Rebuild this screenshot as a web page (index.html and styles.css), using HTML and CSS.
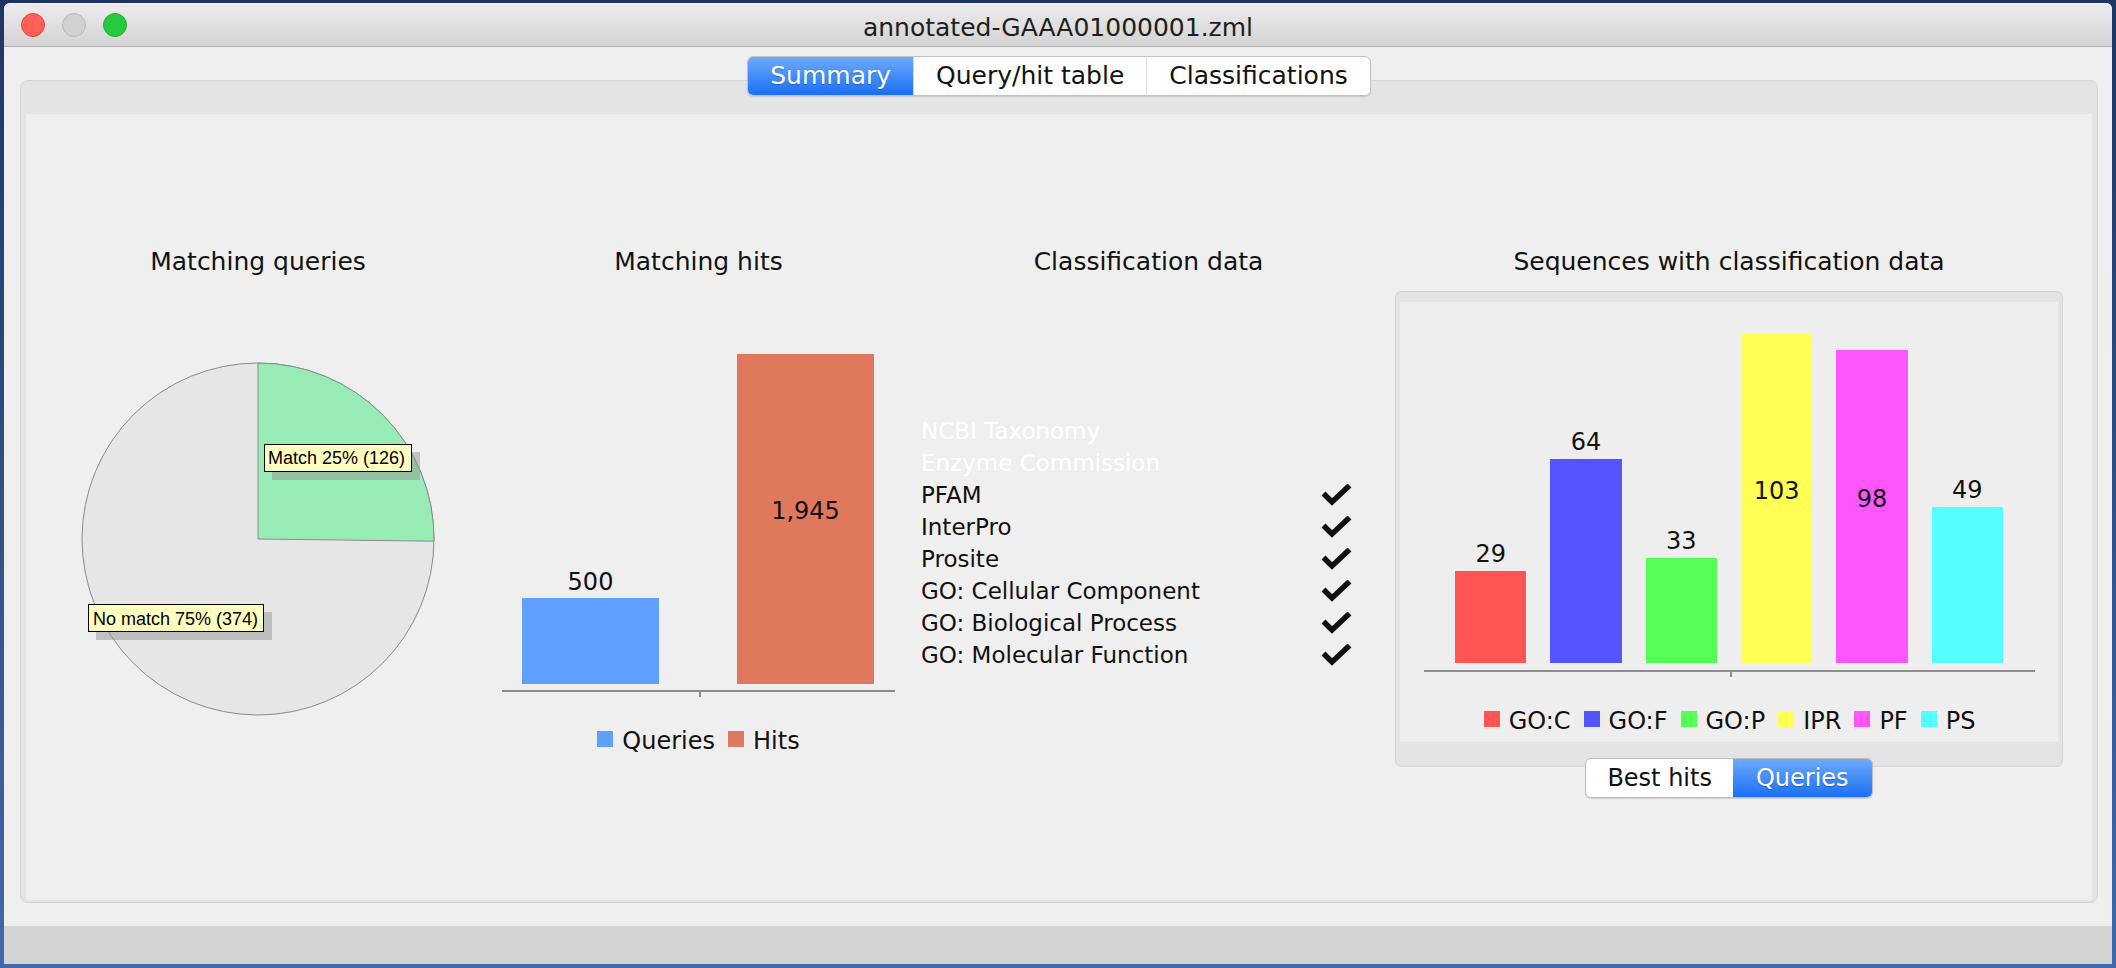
FILE: index.html
```html
<!DOCTYPE html>
<html lang="en">
<head>
  <meta charset="UTF-8" />
  <title>annotated-GAAA01000001.zml</title>
  <link rel="stylesheet" href="styles.css">
</head>
<body>

<div class="window">
  <!-- Title bar -->
  <div class="titlebar">
    <div class="lights">
      <span class="light close"></span>
      <span class="light minimize"></span>
      <span class="light zoom"></span>
    </div>
    <div class="title">annotated-GAAA01000001.zml</div>
    <div></div>
  </div>

  <div class="main">
    <div class="tabs">
      <div class="tab active">Summary</div>
      <div class="tab">Query/hit table</div>
      <div class="tab">Classifications</div>
    </div>

    <div class="panel">
      <div class="content">

        <!-- Matching queries -->
        <div class="col col-pie">
          <h2>Matching queries</h2>
          <svg class="pie" width="436" height="460" viewBox="0 0 436 460">
            <circle cx="218" cy="262" r="176" fill="#e6e6e6" stroke="#8a8a8a" stroke-width="1"/>
            <path d="M218 262 L218 86 A176 176 0 0 1 394 264.2 Z" fill="#96ecb4" stroke="#8a8a8a" stroke-width="1"/>

            <rect x="232" y="175" width="148" height="28" fill="#949494" fill-opacity="0.5"/>
            <rect x="224.5" y="167.5" width="147" height="27" fill="#ffffc0" stroke="#000" stroke-width="1"/>
            <text x="228" y="187" class="pie-label">Match 25% (126)</text>

            <rect x="56" y="335" width="176" height="28" fill="#949494" fill-opacity="0.5"/>
            <rect x="48.5" y="327.5" width="175" height="27" fill="#ffffc0" stroke="#000" stroke-width="1"/>
            <text x="53" y="348" class="pie-label">No match 75% (374)</text>
          </svg>
        </div>

        <!-- Matching hits -->
        <div class="col col-hits">
          <h2>Matching hits</h2>
          <div class="hits-chart">
            <div class="plot hits-plot">
              <div class="bar-col">
                <div class="value">500</div>
                <div class="bar queries" style="height: 86px"></div>
              </div>
              <div class="bar-col">
                <div class="bar hits" style="height: 330px">
                  <div class="value inside">1,945</div>
                </div>
              </div>
            </div>
            <div class="legend">
              <div class="legend-item"><span class="swatch queries"></span>Queries</div>
              <div class="legend-item"><span class="swatch hits"></span>Hits</div>
            </div>
          </div>
        </div>

        <!-- Classification data -->
        <div class="col col-class">
          <h2>Classification data</h2>
          <div class="class-list">
            <div class="class-row off">NCBI Taxonomy</div>
            <div class="class-row off">Enzyme Commission</div>
            <div class="class-row">PFAM
              <svg class="check" width="31" height="22" viewBox="0 0 31 22"><polyline points="2.5,9.5 11,18 28.5,1.5" fill="none" stroke="#111" stroke-width="5.5"/></svg>
            </div>
            <div class="class-row">InterPro
              <svg class="check" width="31" height="22" viewBox="0 0 31 22"><polyline points="2.5,9.5 11,18 28.5,1.5" fill="none" stroke="#111" stroke-width="5.5"/></svg>
            </div>
            <div class="class-row">Prosite
              <svg class="check" width="31" height="22" viewBox="0 0 31 22"><polyline points="2.5,9.5 11,18 28.5,1.5" fill="none" stroke="#111" stroke-width="5.5"/></svg>
            </div>
            <div class="class-row">GO: Cellular Component
              <svg class="check" width="31" height="22" viewBox="0 0 31 22"><polyline points="2.5,9.5 11,18 28.5,1.5" fill="none" stroke="#111" stroke-width="5.5"/></svg>
            </div>
            <div class="class-row">GO: Biological Process
              <svg class="check" width="31" height="22" viewBox="0 0 31 22"><polyline points="2.5,9.5 11,18 28.5,1.5" fill="none" stroke="#111" stroke-width="5.5"/></svg>
            </div>
            <div class="class-row">GO: Molecular Function
              <svg class="check" width="31" height="22" viewBox="0 0 31 22"><polyline points="2.5,9.5 11,18 28.5,1.5" fill="none" stroke="#111" stroke-width="5.5"/></svg>
            </div>
          </div>
        </div>

        <!-- Sequences with classification data -->
        <div class="col col-seq">
          <h2>Sequences with classification data</h2>
          <div class="seq-panel">
            <div class="seq-inner">
              <div class="plot seq-plot">
                <div class="bar-col">
                  <div class="value">29</div>
                  <div class="bar goc" style="height: 92px"></div>
                </div>
                <div class="bar-col">
                  <div class="value">64</div>
                  <div class="bar gof" style="height: 204px"></div>
                </div>
                <div class="bar-col">
                  <div class="value">33</div>
                  <div class="bar gop" style="height: 105px"></div>
                </div>
                <div class="bar-col">
                  <div class="bar ipr" style="height: 329px">
                    <div class="value inside">103</div>
                  </div>
                </div>
                <div class="bar-col">
                  <div class="bar pf" style="height: 313px">
                    <div class="value inside">98</div>
                  </div>
                </div>
                <div class="bar-col">
                  <div class="value">49</div>
                  <div class="bar ps" style="height: 156px"></div>
                </div>
              </div>
              <div class="legend">
                <div class="legend-item"><span class="swatch goc"></span>GO:C</div>
                <div class="legend-item"><span class="swatch gof"></span>GO:F</div>
                <div class="legend-item"><span class="swatch gop"></span>GO:P</div>
                <div class="legend-item"><span class="swatch ipr"></span>IPR</div>
                <div class="legend-item"><span class="swatch pf"></span>PF</div>
                <div class="legend-item"><span class="swatch ps"></span>PS</div>
              </div>
            </div>
          </div>
          <div class="toggle">
            <div class="toggle-btn">Best hits</div>
            <div class="toggle-btn active">Queries</div>
          </div>
        </div>

      </div>
    </div>
  </div>

  <div class="statusbar"></div>
</div>

</body>
</html>
```

FILE: styles.css
```css
body {
  margin: 0;
  height: 968px;
  padding: 3px 4px 4px;
  box-sizing: border-box;
  background: linear-gradient(#1f3561, #4169a9);
  font-family: "DejaVu Sans", "Open Sans", sans-serif;
  color: #111;
}

.window {
  height: 100%;
  display: flex;
  flex-direction: column;
  background: #efefef;
  border-radius: 6px 6px 0 0;
  overflow: hidden;
}

/* Title bar */
.titlebar {
  height: 43px;
  flex-shrink: 0;
  border-bottom: 1px solid #b1b1b1;
  background: linear-gradient(#ededed, #d3d3d3);
  display: grid;
  grid-template-columns: 1fr auto 1fr;
  align-items: center;
}

.lights {
  display: flex;
  gap: 17px;
  padding-left: 17px;
}

.light {
  width: 24px;
  height: 24px;
  border-radius: 50%;
  box-sizing: border-box;
  border: 1px solid;
}

.light.close {
  background: #fe5f57;
  border-color: #e1463f;
}

.light.minimize {
  background: #d1d1d1;
  border-color: #b9b9b9;
}

.light.zoom {
  background: #27c93f;
  border-color: #1dad2b;
}

.title {
  font-size: 25px;
  color: #1e1e1e;
  padding-top: 6px;
}

/* Main area with tabbed pane */
.main {
  flex: 1;
  display: flex;
  flex-direction: column;
  padding: 9px 14px 23px 16px;
  min-height: 0;
}

.tabs {
  align-self: center;
  display: flex;
  background: #fff;
  border: 1px solid #c2c2c2;
  border-radius: 6px;
  box-shadow: 0 1px 1px rgba(0,0,0,0.12);
  position: relative;
  z-index: 1;
}

.tab {
  font-size: 25px;
  line-height: 38px;
  padding: 0 22px;
  border-left: 1px solid #d9d9d9;
}

.tab.active {
  border-left: none;
  border-radius: 5px 0 0 5px;
  background: linear-gradient(#6eabfb, #1a6ff6);
  color: #fff;
  text-shadow: 0 1px 1px rgba(0,0,0,0.25);
}

.panel {
  flex: 1;
  display: flex;
  margin-top: -16px;
  padding: 33px 5px 2px;
  background: #e4e4e4;
  border: 1px solid #d6d6d6;
  border-radius: 8px;
}

.content {
  flex: 1;
  display: flex;
  padding-left: 14px;
  background: #efefef;
}

.col {
  display: flex;
  flex-direction: column;
  align-items: center;
  padding-top: 133px;
}

.col h2 {
  margin: 0;
  font-size: 25px;
  font-weight: normal;
  line-height: 30px;
  white-space: nowrap;
}

.col-pie { width: 436px; }
.col-hits { width: 445px; }
.col-class { width: 455px; }
.col-seq { width: 706px; }

/* Pie */
.pie {
  display: block;
}

.pie-label {
  font-family: "Liberation Sans", Arial, sans-serif;
  font-size: 18px;
  fill: #000;
}

/* Bar charts */
.hits-chart {
  width: 393px;
  margin-top: 35px;
}

.plot {
  display: flex;
  align-items: flex-end;
  box-sizing: border-box;
  border-bottom: 2px solid #8c8c8c;
  position: relative;
}

.plot::after {
  content: "";
  position: absolute;
  left: 50%;
  bottom: -7px;
  width: 2px;
  height: 5px;
  background: #8c8c8c;
}

.hits-plot {
  height: 380px;
  padding: 0 21px 6px 20px;
  justify-content: space-between;
}

.hits-plot .bar-col {
  width: 137px;
}

.bar-col {
  display: flex;
  flex-direction: column;
}

.value {
  font-size: 24px;
  line-height: 24px;
  text-align: center;
  margin-bottom: 4px;
}

.bar {
  position: relative;
}

.value.inside {
  position: absolute;
  left: 0;
  right: 0;
  top: calc(50% - 20px);
  margin: 0;
}

.queries { background: #5fa0ff; }
.hits { background: #e0785e; }
.goc { background: #ff5555; }
.gof { background: #5555ff; }
.gop { background: #55ff55; }
.ipr { background: #ffff55; }
.pf { background: #ff55ff; }
.ps { background: #55ffff; }

.legend {
  display: flex;
  justify-content: center;
  align-items: center;
  gap: 13px;
  margin-top: 37px;
  font-size: 24px;
  line-height: 24px;
}

.legend-item {
  display: flex;
  align-items: center;
  gap: 9px;
}

.swatch {
  width: 16px;
  height: 16px;
  margin-bottom: 4px;
}

/* Classification list */
.class-list {
  align-self: flex-start;
  width: 431px;
  margin-top: 138px;
  font-size: 23px;
}

.class-row {
  height: 32px;
  line-height: 32px;
  display: flex;
  justify-content: space-between;
  align-items: center;
  white-space: nowrap;
}

.class-row.off {
  color: #fff;
}

.check {
  display: block;
}

/* Sequences panel */
.seq-panel {
  width: 668px;
  margin-top: 14px;
  box-sizing: border-box;
  padding: 10px 4px 24px;
  background: #e3e3e3;
  border: 1px solid #d6d6d6;
  border-radius: 6px;
}

.seq-inner {
  height: 440px;
  box-sizing: border-box;
  padding: 0 23px 0 24px;
  background: #eeeeee;
}

.seq-plot {
  height: 370px;
  padding: 0 32px 7px 31px;
  gap: 24px;
}

.seq-plot .bar-col {
  flex: 1;
}

.seq-plot .value {
  margin-bottom: 5px;
}

.toggle {
  display: flex;
  margin-top: -9px;
  background: #fff;
  border: 1px solid #bdbdbd;
  border-radius: 6px;
  box-shadow: 0 1px 1px rgba(0,0,0,0.12);
  position: relative;
}

.toggle-btn {
  font-size: 24px;
  line-height: 38px;
  padding: 0 21px;
}

.toggle-btn.active {
  padding: 0 23px;
  border-radius: 0 5px 5px 0;
  background: linear-gradient(#6eabfb, #1a6ff6);
  color: #fff;
  text-shadow: 0 1px 1px rgba(0,0,0,0.25);
}

.statusbar {
  height: 38px;
  flex-shrink: 0;
  background: #d3d3d3;
}
```
